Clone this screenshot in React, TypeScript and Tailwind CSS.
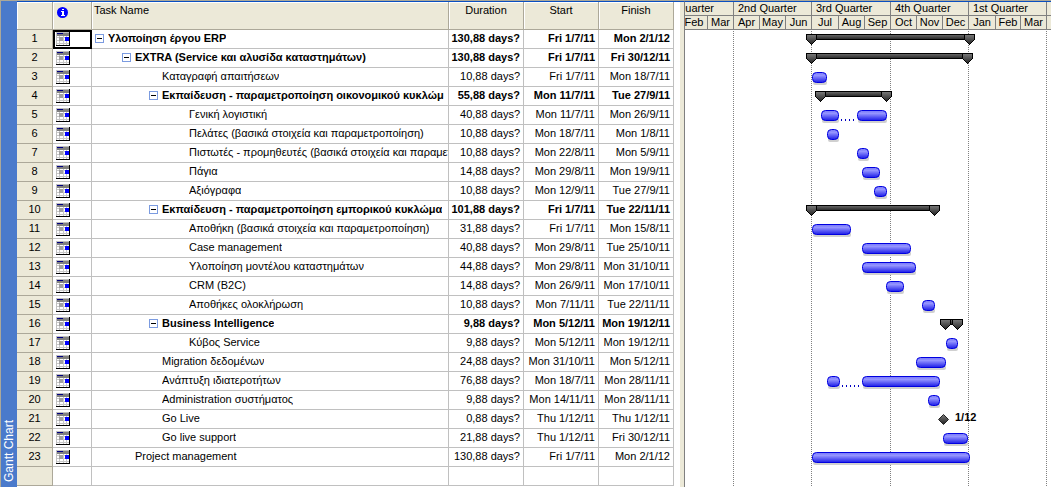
import React, { useState } from "react";

type Bar = { from: number; to: number };

type Task = {
    id: number;
    name: string;
    level: number;
    duration: string;
    start: string;
    finish: string;
    summary?: boolean;
    milestone?: string;
    bars: Bar[];
};

const tasks: Task[] = [
    { id: 1, name: "Υλοποίηση έργου ERP", level: 0, duration: "130,88 days?", start: "Fri 1/7/11", finish: "Mon 2/1/12", summary: true, bars: [{ from: 121, to: 290 }] },
    { id: 2, name: "EXTRA (Service και αλυσίδα καταστημάτων)", level: 1, duration: "130,88 days?", start: "Fri 1/7/11", finish: "Fri 30/12/11", summary: true, bars: [{ from: 121, to: 288 }] },
    { id: 3, name: "Καταγραφή απαιτήσεων", level: 2, duration: "10,88 days?", start: "Fri 1/7/11", finish: "Mon 18/7/11", bars: [{ from: 127, to: 142 }] },
    { id: 4, name: "Εκπαίδευση - παραμετροποίηση οικονομικού κυκλώμ", level: 2, duration: "55,88 days?", start: "Mon 11/7/11", finish: "Tue 27/9/11", summary: true, bars: [{ from: 130, to: 207 }] },
    { id: 5, name: "Γενική λογιστική", level: 3, duration: "40,88 days?", start: "Mon 11/7/11", finish: "Mon 26/9/11", bars: [{ from: 136, to: 154 }, { from: 172, to: 202 }] },
    { id: 6, name: "Πελάτες (βασικά στοιχεία και παραμετροποίηση)", level: 3, duration: "10,88 days?", start: "Mon 18/7/11", finish: "Mon 1/8/11", bars: [{ from: 142, to: 154 }] },
    { id: 7, name: "Πιστωτές - προμηθευτές (βασικά στοιχεία και παραμετ", level: 3, duration: "10,88 days?", start: "Mon 22/8/11", finish: "Mon 5/9/11", bars: [{ from: 172, to: 184 }] },
    { id: 8, name: "Πάγια", level: 3, duration: "14,88 days?", start: "Mon 29/8/11", finish: "Mon 19/9/11", bars: [{ from: 177, to: 195 }] },
    { id: 9, name: "Αξιόγραφα", level: 3, duration: "10,88 days?", start: "Mon 12/9/11", finish: "Tue 27/9/11", bars: [{ from: 189, to: 202 }] },
    { id: 10, name: "Εκπαίδευση - παραμετροποίηση εμπορικού κυκλώμα", level: 2, duration: "101,88 days?", start: "Fri 1/7/11", finish: "Tue 22/11/11", summary: true, bars: [{ from: 121, to: 255 }] },
    { id: 11, name: "Αποθήκη (βασικά στοιχεία και παραμετροποίηση)", level: 3, duration: "31,88 days?", start: "Fri 1/7/11", finish: "Mon 15/8/11", bars: [{ from: 127, to: 166 }] },
    { id: 12, name: "Case management", level: 3, duration: "40,88 days?", start: "Mon 29/8/11", finish: "Tue 25/10/11", bars: [{ from: 177, to: 226 }] },
    { id: 13, name: "Υλοποίηση μοντέλου καταστημάτων", level: 3, duration: "44,88 days?", start: "Mon 29/8/11", finish: "Mon 31/10/11", bars: [{ from: 177, to: 231 }] },
    { id: 14, name: "CRM (B2C)", level: 3, duration: "14,88 days?", start: "Mon 26/9/11", finish: "Mon 17/10/11", bars: [{ from: 201, to: 219 }] },
    { id: 15, name: "Αποθήκες ολοκλήρωση", level: 3, duration: "10,88 days?", start: "Mon 7/11/11", finish: "Tue 22/11/11", bars: [{ from: 237, to: 250 }] },
    { id: 16, name: "Business Intelligence", level: 2, duration: "9,88 days?", start: "Mon 5/12/11", finish: "Mon 19/12/11", summary: true, bars: [{ from: 255, to: 278 }] },
    { id: 17, name: "Κύβος Service", level: 3, duration: "9,88 days?", start: "Mon 5/12/11", finish: "Mon 19/12/11", bars: [{ from: 261, to: 273 }] },
    { id: 18, name: "Migration δεδομένων", level: 2, duration: "24,88 days?", start: "Mon 31/10/11", finish: "Mon 5/12/11", bars: [{ from: 231, to: 261 }] },
    { id: 19, name: "Ανάπτυξη ιδιατεροτήτων", level: 2, duration: "76,88 days?", start: "Mon 18/7/11", finish: "Mon 28/11/11", bars: [{ from: 142, to: 155 }, { from: 177, to: 255 }] },
    { id: 20, name: "Administration συστήματος", level: 2, duration: "9,88 days?", start: "Mon 14/11/11", finish: "Mon 28/11/11", bars: [{ from: 243, to: 255 }] },
    { id: 21, name: "Go Live", level: 2, duration: "0,88 days?", start: "Thu 1/12/11", finish: "Thu 1/12/11", milestone: "1/12", bars: [{ from: 253, to: 264 }] },
    { id: 22, name: "Go live support", level: 2, duration: "21,88 days?", start: "Thu 1/12/11", finish: "Fri 30/12/11", bars: [{ from: 258, to: 283 }] },
    { id: 23, name: "Project management", level: 1, duration: "130,88 days?", start: "Fri 1/7/11", finish: "Mon 2/1/12", bars: [{ from: 127, to: 285 }] },
];

const quarters = [
    { label: "1st Quarter", width: 79 },
    { label: "2nd Quarter", width: 78 },
    { label: "3rd Quarter", width: 79 },
    { label: "4th Quarter", width: 78 },
    { label: "1st Quarter", width: 78 },
    { label: "", width: 78 },
];

const months = [
    { label: "Feb", width: 27 },
    { label: "Mar", width: 26 },
    { label: "Apr", width: 26 },
    { label: "May", width: 26 },
    { label: "Jun", width: 26 },
    { label: "Jul", width: 27 },
    { label: "Aug", width: 26 },
    { label: "Sep", width: 26 },
    { label: "Oct", width: 26 },
    { label: "Nov", width: 26 },
    { label: "Dec", width: 26 },
    { label: "Jan", width: 27 },
    { label: "Feb", width: 25 },
    { label: "Mar", width: 26 },
    { label: "", width: 26 },
];

const quarterLines = [48, 126, 205, 283, 361];

const indents = ["pl-[3px]", "pl-[30px]", "pl-[57px]", "pl-[84px]"];

const headCell = "border-r border-b border-[#aca899] bg-[#ece9d8] p-0 pt-px align-top font-normal shadow-[inset_1px_1px_0_#fff]";
const idCell = "h-[19px] border-r border-b border-[#aca899] bg-[#ece9d8] p-0 pb-[3px] text-center font-normal";
const iconCell = "h-[19px] border-r border-b border-[#c0c0c0] p-0";
const cell = "h-[19px] border-r border-b border-[#c0c0c0] p-0 pb-[2px]";

const InfoIcon = () => (
    <svg width="11" height="11" viewBox="0 0 11 11" className="ml-1 mt-1" role="img" aria-label="Indicators">
        <circle cx="5.5" cy="5.5" r="5.5" fill="#0000ff" />
        <path d="M5 2h2v1H5zM4 4h3v4h1v1H4V8h1V5H4z" fill="#fff" />
    </svg>
);

const CalendarIcon = () => (
    <svg width="14" height="14" viewBox="0 0 14 14" shapeRendering="crispEdges" className="ml-[3px] block">
        <rect width="14" height="14" fill="#000" />
        <rect width="13" height="13" fill="#c0c0c0" />
        <rect x="1" y="1" width="12" height="3" fill="#808080" />
        <rect x="1" y="1" width="6" height="1" fill="#000080" />
        <rect x="1" y="4" width="12" height="9" fill="#fff" />
        <path d="M3 4h1v9h-1zM7 4h1v9h-1zM10 4h1v9h-1zM1 5h12v1h-12zM1 8h12v1h-12zM1 11h12v1h-12z" fill="#c8c8c8" />
        <rect x="3" y="5" width="4" height="4" fill="#a0a0a0" />
        <rect x="9" y="5" width="4" height="4" fill="#0000ff" />
    </svg>
);

const SummaryBar = ({ from, to }: Bar) => (
    <g shapeRendering="crispEdges">
        <rect x={from} y="4" width={to - from} height="6" fill="#000" />
        <rect x={from + 1} y="5" width={to - from - 2} height="4" fill="url(#summary)" />
        {[from, to - 11].map((x) => (
            <path key={x} d={`M${x + 0.5} 4.5h10v5l-5 5l-5 -5z`} fill="url(#cap)" stroke="#000" />
        ))}
    </g>
);

const TaskBar = ({ from, to }: Bar) => (
    <g>
        <rect x={from + 1} y="12" width={to - from - 1} height="5" rx="2" fill="#d0d0d0" />
        <rect x={from + 0.5} y="4.5" width={to - from - 1} height="10" rx="4" fill="url(#task)" stroke="#0000e0" />
    </g>
);

const TaskBars = ({ task }: { task: Task }) => {
    const [first, second] = task.bars;

    if (task.milestone) {
        return (
            <g>
                <path d={`M${first.from + 5.5} 4.5l5 5l-5 5l-5 -5z`} fill="url(#cap)" stroke="#222" />
                <text x={first.to + 6} y="11" className="text-[11px] font-bold">{task.milestone}</text>
            </g>
        );
    }
    if (task.summary) {
        return <SummaryBar from={first.from} to={first.to} />;
    }
    return (
        <>
            {second && (
                <path d={`M${first.to + 2} 14H${second.from}`} stroke="#0000c0" strokeWidth="2" strokeDasharray="1 3" shapeRendering="crispEdges" />
            )}
            {task.bars.map((bar) => (
                <TaskBar key={bar.from} from={bar.from} to={bar.to} />
            ))}
        </>
    );
};

const App: React.FC = () => {
    const [collapsed, setCollapsed] = useState<number[]>([]);

    const toggle = (id: number) => {
        setCollapsed(collapsed.includes(id) ? collapsed.filter((c) => c !== id) : [...collapsed, id]);
    };

    // A row is hidden while any of its parent summaries is collapsed
    let hideBelow = Infinity;
    const rows = tasks.filter((task) => {
        if (task.level > hideBelow) return false;
        hideBelow = collapsed.includes(task.id) ? task.level : Infinity;
        return true;
    });

    return (
        <main className="flex h-screen overflow-hidden border-t border-[#aca899] bg-white font-['Liberation_Sans',Arial,sans-serif] text-[11px] leading-[14px] text-black">
            {/* View bar */}
            <div className="flex w-[17px] shrink-0 items-end justify-center border-l border-[#aca899] bg-[#4a7acb] pb-[5px]">
                <span className="rotate-180 text-[12px] leading-[16px] text-white [writing-mode:vertical-rl]">Gantt Chart</span>
            </div>

            {/* Task sheet */}
            <div className="shrink-0 border-t border-[#0a4fc0]">
                <table className="w-[657px] table-fixed border-separate border-spacing-0">
                    <colgroup>
                        <col className="w-[36px]" />
                        <col className="w-[39px]" />
                        <col />
                        <col className="w-[75px]" />
                        <col className="w-[75px]" />
                        <col className="w-[75px]" />
                    </colgroup>
                    <thead>
                        <tr className="h-[28px]">
                            <th className={headCell}></th>
                            <th className={headCell}><InfoIcon /></th>
                            <th className={`${headCell} pl-[2px] text-left`}>Task Name</th>
                            <th className={headCell}>Duration</th>
                            <th className={headCell}>Start</th>
                            <th className={headCell}>Finish</th>
                        </tr>
                    </thead>
                    <tbody>
                        {rows.map((task) => (
                            <tr key={task.id} className={task.summary ? "font-bold" : ""}>
                                <td className={idCell}>{task.id}</td>
                                <td className={task.id === 1 ? `${iconCell} outline-2 -outline-offset-2 outline-black` : iconCell}><CalendarIcon /></td>
                                <td className={`${cell} ${indents[task.level]}`}>
                                    <div className="flex items-center gap-1 overflow-hidden whitespace-nowrap">
                                        {task.summary ? (
                                            <button
                                                type="button"
                                                onClick={() => toggle(task.id)}
                                                aria-label={`Toggle ${task.name}`}
                                                className="flex h-[9px] w-[9px] shrink-0 items-center justify-center border border-[#7b9be0] bg-white"
                                            >
                                                <span className="h-px w-[5px] bg-black" />
                                            </button>
                                        ) : (
                                            <span className="w-[9px] shrink-0" />
                                        )}
                                        <span className="min-w-0 overflow-hidden">{task.name}</span>
                                    </div>
                                </td>
                                <td className={`${cell} pr-[3px] text-right whitespace-nowrap`}>{task.duration}</td>
                                <td className={`${cell} pr-[3px] text-right whitespace-nowrap`}>{task.start}</td>
                                <td className={`${cell} pr-[3px] text-right whitespace-nowrap`}>{task.finish}</td>
                            </tr>
                        ))}
                        <tr>
                            <td className={idCell}></td>
                            <td className={cell}></td>
                            <td className={cell}></td>
                            <td className={cell}></td>
                            <td className={cell}></td>
                            <td className={cell}></td>
                        </tr>
                    </tbody>
                </table>
            </div>

            {/* Splitter */}
            <div className="w-[11px] shrink-0 border-t border-r border-t-[#0a4fc0] border-r-[#808080] bg-white pl-[6px]">
                <div className="h-full bg-[#ece9d8]" />
            </div>

            {/* Gantt chart */}
            <section className="min-w-0 flex-1 overflow-hidden border-t border-[#0a4fc0]">
                <div className="flex bg-[#ece9d8]">
                    <div className="-ml-[30px] flex">
                        {quarters.map((quarter, i) => (
                            <div key={i} style={{ width: quarter.width }} className="h-[14px] shrink-0 border-r border-b border-[#808080] pl-1 leading-[13px]">
                                {quarter.label}
                            </div>
                        ))}
                    </div>
                </div>
                <div className="flex bg-[#ece9d8]">
                    <div className="-ml-[4px] flex">
                        {months.map((month, i) => (
                            <div key={i} style={{ width: month.width }} className="h-[14px] shrink-0 border-r border-b border-[#808080] text-center leading-[13px]">
                                {month.label}
                            </div>
                        ))}
                    </div>
                </div>
                <svg width="100%" height="456" className="block">
                    <defs>
                        <linearGradient id="task" x1="0" y1="0" x2="0" y2="1">
                            <stop offset="0" stopColor="#7878f8" />
                            <stop offset="0.3" stopColor="#9494ff" />
                            <stop offset="1" stopColor="#1c1ce8" />
                        </linearGradient>
                        <linearGradient id="summary" x1="0" y1="0" x2="0" y2="1">
                            <stop offset="0" stopColor="#666" />
                            <stop offset="1" stopColor="#2c2c2c" />
                        </linearGradient>
                        <linearGradient id="cap" x1="0" y1="0" x2="0" y2="1">
                            <stop offset="0" stopColor="#7c7c7c" />
                            <stop offset="1" stopColor="#202020" />
                        </linearGradient>
                    </defs>
                    {quarterLines.map((x) => (
                        <path key={x} d={`M${x + 0.5} 1V456`} stroke="#808080" strokeDasharray="1 1" shapeRendering="crispEdges" />
                    ))}
                    {rows.map((task, i) => (
                        <g key={task.id} transform={`translate(0 ${i * 19})`}>
                            <TaskBars task={task} />
                        </g>
                    ))}
                </svg>
            </section>
        </main>
    );
};

export default App;
